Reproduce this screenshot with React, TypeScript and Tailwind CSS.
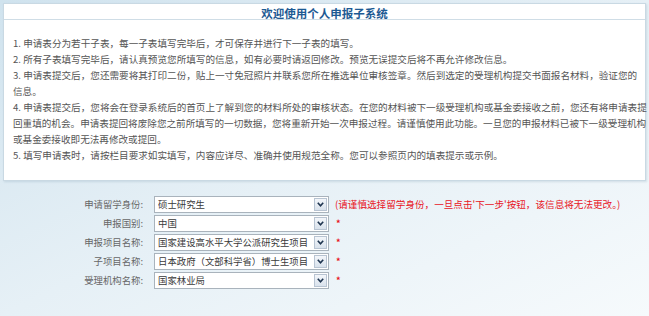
const notes: string[][] = [
  ["1. 申请表分为若干子表，每一子表填写完毕后，才可保存并进行下一子表的填写。"],
  ["2. 所有子表填写完毕后，请认真预览您所填写的信息，如有必要时请返回修改。预览无误提交后将不再允许修改信息。"],
  [
    "3. 申请表提交后，您还需要将其打印二份，贴上一寸免冠照片并联系您所在推选单位审核签章。然后到选定的受理机构提交书面报名材料，验证您的",
    "信息。",
  ],
  [
    "4. 申请表提交后，您将会在登录系统后的首页上了解到您的材料所处的审核状态。在您的材料被下一级受理机构或基金委接收之前，您还有将申请表提",
    "回重填的机会。申请表提回将废除您之前所填写的一切数据，您将重新开始一次申报过程。请谨慎使用此功能。一旦您的申报材料已被下一级受理机构",
    "或基金委接收即无法再修改或提回。",
  ],
  ["5. 填写申请表时，请按栏目要求如实填写，内容应详尽、准确并使用规范全称。您可以参照页内的填表提示或示例。"],
];

const fields = [
  { label: "申请留学身份:", value: "硕士研究生", hint: true },
  { label: "申报国别:", value: "中国" },
  { label: "申报项目名称:", value: "国家建设高水平大学公派研究生项目" },
  { label: "子项目名称:", value: "日本政府（文部科学省）博士生项目" },
  { label: "受理机构名称:", value: "国家林业局" },
];

const font = { fontFamily: '"Noto Sans CJK SC", "Liberation Sans", sans-serif' };

const FakeSelect = ({ value }: { value: string }) => (
  <div className="ml-[11px] flex h-[17px] w-[175px] items-center border border-[#a9b3bc] bg-white pl-[3px] pr-[1px]">
    <span className="flex-1 overflow-hidden whitespace-nowrap text-[9.4px] leading-[15px] text-[#3a3a3a]">{value}</span>
    <div className="flex h-[13px] w-[13px] items-center justify-center border border-[#b8c4d2] bg-linear-to-b from-[#f3f6fa] to-[#d9e2ec]">
      <svg width="7" height="5" viewBox="0 0 7 5">
        <polyline points="0.8,0.8 3.5,3.8 6.2,0.8" fill="none" stroke="#1f3550" strokeWidth="1.6" />
      </svg>
    </div>
  </div>
);

export default function App() {
  return (
    <div
      className="flex h-[316px] w-[649px] flex-col overflow-hidden bg-linear-to-br from-[#d0e3ee] via-[#e6f0f6] to-[#f6fafc]"
      style={font}
    >
      <div className="mx-[3px] mt-[3px] h-[178px] border border-[#c9d9e3] bg-white shadow-[1px_1px_2px_rgba(120,150,170,0.25)]">
        <div className="flex h-[16px] items-center justify-center border-b border-[#cfdde6]">
          <h1 className="pt-[2px] text-[11.5px] font-bold leading-[14px] text-[#1d5a93]">欢迎使用个人申报子系统</h1>
        </div>
        <div className="pl-[9px] pt-[15px] text-[9.6px] leading-[16px] text-[#555]">
          {notes.map((lines, i) => (
            <div key={i}>
              {lines.map((line, j) => (
                <p key={j} className="whitespace-nowrap">
                  {line}
                </p>
              ))}
            </div>
          ))}
        </div>
      </div>

      <div className="mt-[15px] flex flex-col gap-[2px]">
        {fields.map((f) => (
          <div key={f.label} className="flex h-[17px] items-center">
            <span className="w-[143px] text-right text-[9.4px] text-[#666]">{f.label}</span>
            <FakeSelect value={f.value} />
            {f.hint ? (
              <span className="ml-[6px] whitespace-nowrap text-[9.6px] text-[#e8141e]">
                (请谨慎选择留学身份，一旦点击'下一步'按钮，该信息将无法更改。)
              </span>
            ) : (
              <span className="ml-[7px] text-[9px] font-bold leading-none text-[#e8141e]">*</span>
            )}
          </div>
        ))}
      </div>
    </div>
  );
}
